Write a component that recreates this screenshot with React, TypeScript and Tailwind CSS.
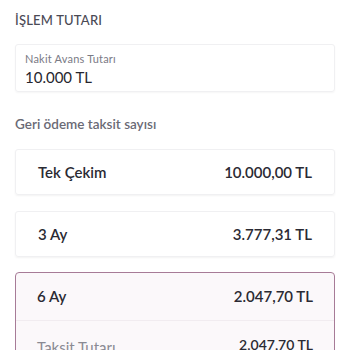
const options = [
  { id: 'tek', label: 'Tek Çekim', amount: '10.000,00 TL' },
  { id: '3', label: '3 Ay', amount: '3.777,31 TL' },
];

export default function App() {
  return (
    <div className="w-[350px] h-[350px] overflow-hidden bg-white px-[15px] pt-[11px] font-['Lato','Noto_Sans',sans-serif]">
      <div className="text-[13px] font-medium text-[#4a4a55] tracking-[0.2px]">İŞLEM TUTARI</div>

      <div className="mt-[13px] h-[48px] rounded-[3px] border border-[#f0f0f2] shadow-[0_1px_2px_rgba(0,0,0,0.04)] px-[9px] pt-[7px]">
        <div className="text-[11px] leading-[13px] text-[#7a7a85] tracking-[0.2px]">Nakit Avans Tutarı</div>
        <div className="text-[15px] leading-[20px] text-[#26262e] mt-[2px]">10.000 TL</div>
      </div>

      <div className="mt-[22px] text-[13.5px] font-semibold text-[#6a6a75]">Geri ödeme taksit sayısı</div>

      <div className="mt-[15px] flex flex-col gap-[16px]">
        {options.map((o) => (
          <div
            key={o.id}
            className="h-[46px] flex items-center justify-between rounded-[3px] border border-[#f0f0f2] shadow-[0_1px_2px_rgba(0,0,0,0.05)] pl-[22px] pr-[22px]"
          >
            <span className="text-[15px] font-semibold text-[#2a2a33]">{o.label}</span>
            <span className="text-[15px] font-semibold text-[#2a2a33]">{o.amount}</span>
          </div>
        ))}

        <div className="rounded-[4px] border-[1.5px] border-[#a77b97] bg-[#fbf8fa] -mt-[1px]">
          <div className="h-[48px] flex items-center justify-between px-[21px] border-b border-[#f1ecf0]">
            <span className="text-[15px] font-semibold text-[#2a2a33]">6 Ay</span>
            <span className="text-[15px] font-semibold text-[#2a2a33]">2.047,70 TL</span>
          </div>
          <div className="h-[48px] flex items-center justify-between px-[21px]">
            <span className="text-[15px] text-[#8a8a93] mt-[4px]">Taksit Tutarı</span>
            <span className="text-[14px] font-semibold text-[#2a2a33]">2.047,70 TL</span>
          </div>
        </div>
      </div>
    </div>
  );
}
